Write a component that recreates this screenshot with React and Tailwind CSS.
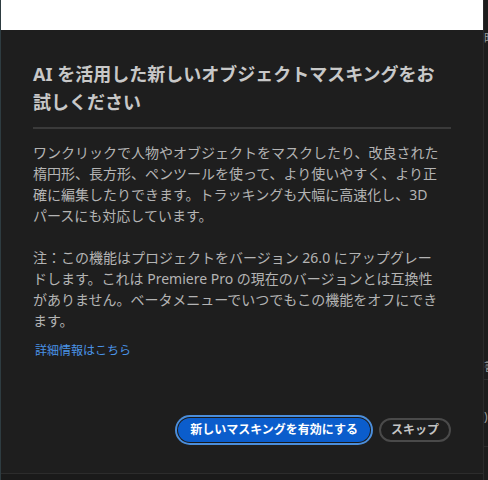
const FONT = { fontFamily: '"Noto Sans", "Noto Sans CJK JP", sans-serif' }

const TitleBlock = () => (
  <div>
    <h1 className="text-[18px] leading-[28px] font-bold text-[#c8c8c8] whitespace-nowrap">
      AI を活用した新しいオブジェクトマスキングをお<br />試しください
    </h1>
    <div className="mt-[11px] h-[2px] bg-[#3a3a3a]" />
  </div>
)

const Body = () => (
  <div className="text-[14px] leading-[21px] text-[#b4b4b4] whitespace-nowrap">
    <p className="mt-[13px]">
      ワンクリックで人物やオブジェクトをマスクしたり、改良された<br />
      楕円形、長方形、ペンツールを使って、より使いやすく、より正<br />
      確に編集したりできます。トラッキングも大幅に高速化し、3D<br />
      パースにも対応しています。
    </p>
    <p className="mt-[21px]">
      注：この機能はプロジェクトをバージョン 26.0 にアップグレー<br />
      ドします。これは Premiere Pro の現在のバージョンとは互換性<br />
      がありません。ベータメニューでいつでもこの機能をオフにでき<br />
      ます。
    </p>
    <a className="block mt-[11px] ml-[2px] text-[12px] leading-[18px] text-[#4a93e6]">
      詳細情報はこちら
    </a>
  </div>
)

const Actions = () => (
  <div className="mt-auto mb-[31px] flex justify-end items-center gap-[9px]">
    <button className="h-[24px] px-[12px] rounded-full bg-[#0b5dcc] text-white text-[12px] font-bold leading-none ring-2 ring-[#4b8edb] ring-offset-1 ring-offset-[#1a1a1a]">
      新しいマスキングを有効にする
    </button>
    <button className="h-[24px] px-[10px] rounded-full border-2 border-[#4a4a4a] text-[#c4c4c4] text-[12px] font-bold leading-none">
      スキップ
    </button>
  </div>
)

export default function App() {
  return (
    <div className="w-[488px] h-[480px] flex bg-[#1e1e1e] overflow-hidden" style={FONT}>
      <div className="w-[1px] bg-[#2e3c41]" />
      <div className="w-[482px] flex flex-col">
        <div className="h-[30px] bg-white" />
        <div className="h-[443px] flex flex-col px-[32px] pt-[30px] bg-[#1e1e1e]">
          <TitleBlock />
          <Body />
          <Actions />
        </div>
        <div className="flex-1 border-t border-[#2c2c2c] bg-[#1a1a1a]" />
      </div>
      <div className="w-[5px] border-l border-[#2a2a2a] bg-[#1c1c1c] overflow-hidden flex flex-col text-[12px] leading-[16px] text-[#9a9a9a] whitespace-nowrap">
        <span className="mt-[31px]">時</span>
        <span className="mt-[312px]">書</span>
        <div className="mt-[4px] h-px bg-[#2c2c2c]" />
        <span className="mt-[29px]">)</span>
        <div className="mt-[21px] h-px bg-[#2c2c2c]" />
      </div>
    </div>
  )
}
